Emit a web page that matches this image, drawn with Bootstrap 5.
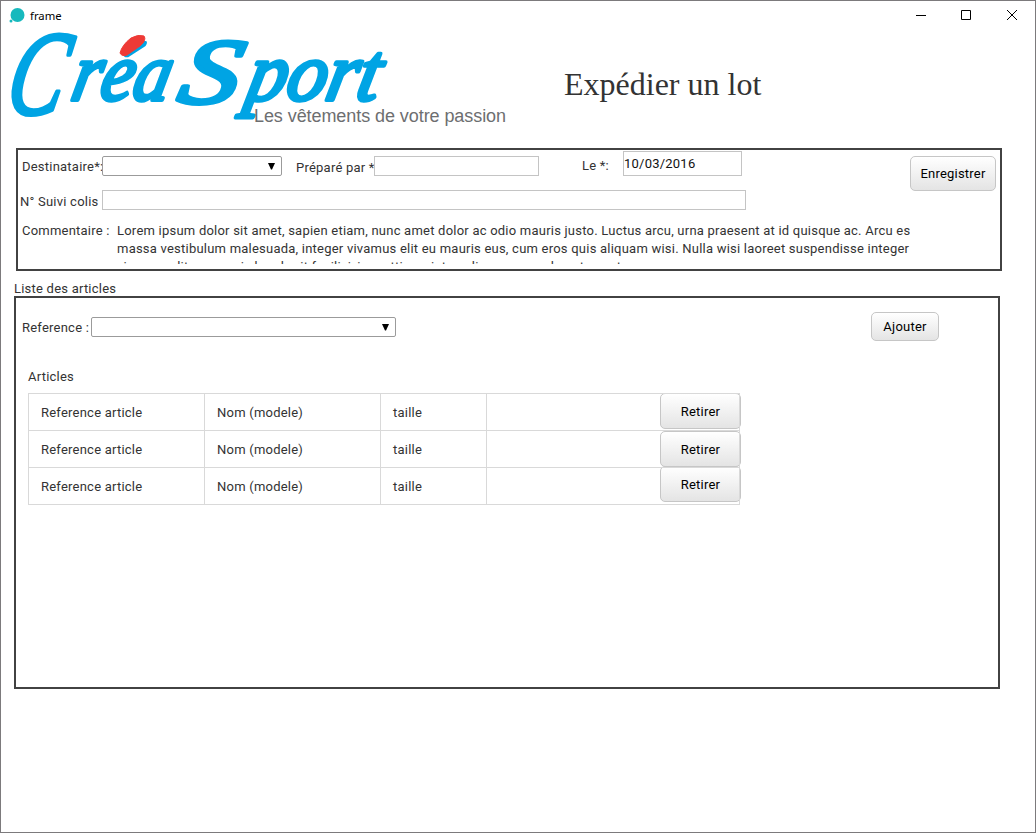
<!DOCTYPE html>
<html lang="fr">
<head>
<meta charset="utf-8">
<title>frame</title>
<link href="https://cdn.jsdelivr.net/npm/bootstrap@5.3.0/dist/css/bootstrap.min.css" rel="stylesheet">
<style>
body{font-family:Roboto,sans-serif;font-size:13px;line-height:18px;letter-spacing:.225px;color:#333;background:#fff}
.win{height:833px;border:1px solid #7c7a7c}
.titlebar{height:29px;padding:0 16px 0 8px}
.titlebar .caption{font-family:"Noto Sans",sans-serif;font-size:11.300px;letter-spacing:0;color:#000}
.masthead{height:118px}
.title{font-family:"Liberation Serif",serif;font-size:32px;line-height:36px;letter-spacing:0;color:#333;margin:36px 0 0 53px;font-weight:400}
.panel{border:2px solid #424242;width:986px}
.p-form{height:123px;margin-left:15px}
.p-list{height:393px;margin-left:13px}
.fld{height:20px;border:1px solid #c4c4c4;border-radius:0;padding:0;min-height:0;font-size:13px;letter-spacing:.225px;background:transparent;flex:none}
.drop{border:1px solid #9b9b9b;border-radius:2px;height:20px;padding-right:6px;flex:none}
.gbtn{--bs-btn-font-size:13px;--bs-btn-padding-x:0;--bs-btn-padding-y:0;--bs-btn-color:#000;border:1px solid #c6c6c6;border-radius:5px;background:linear-gradient(#fff,#e4e4e4);letter-spacing:.225px;display:flex;align-items:center;justify-content:center;flex:none}
.lbl{white-space:nowrap;flex:none}
.comment{width:793px;height:42px;overflow:hidden;white-space:nowrap}
.list-title{margin:9px 0 -2px 13px;height:18px}
.art{width:712px;margin:7px 0 0 12px;table-layout:fixed;border-collapse:collapse;color:#333}
.art td{border:1px solid #d9d9d9;height:37px;padding:1px 0 0 12px;vertical-align:middle}
.art td.act{padding:0;vertical-align:top}
.act .gbtn{width:81px;height:36px;padding-top:1px;margin:-1px -2px 0 auto}
tr:nth-child(2) .act .gbtn{margin-top:0}
tr:nth-child(3) .act .gbtn{margin-top:-2px}
</style>
</head>
<body>
<div class="win d-flex flex-column">
  <header class="titlebar d-flex align-items-center">
    <svg width="17" height="17" viewBox="0 0 17 17"><circle cx="8.500" cy="8" r="7" fill="#17b9bd"/><circle cx="2" cy="14" r="1.500" fill="#17b9bd"/></svg>
    <span class="caption ms-1 me-auto">frame</span>
    <svg width="104" height="14" viewBox="0 0 104 14" fill="none" stroke="#000" stroke-width="1"><path d="M1 6.500h10M46.500 1.500h9v9h-9zM92 1l10 10M102 1l-10 10"/></svg>
  </header>
  <div class="masthead d-flex">
    <svg class="flex-shrink-0" width="510" height="104" viewBox="1 30 510 104" font-family="Liberation Serif, serif">
      <text transform="translate(21.3 0) skewX(-12)" fill="#00a4e4" stroke="#00a4e4" stroke-width="4" stroke-linejoin="round" font-style="italic" letter-spacing="0"><tspan x="6" y="114" font-size="120" textLength="56" lengthAdjust="spacingAndGlyphs">C</tspan><tspan x="69" y="100" font-size="82" textLength="98" lengthAdjust="spacingAndGlyphs">réa</tspan><tspan x="176" y="103" font-size="93" textLength="60" lengthAdjust="spacingAndGlyphs">S</tspan><tspan x="244" y="100" font-size="82" textLength="132" lengthAdjust="spacingAndGlyphs">port</tspan></text>
      <path d="M120 53Q122 45 131 38Q138 34 144 36Q147 40 140 46L127 55Q122 57 120 53Z" fill="#ee3a36" stroke="#ee3a36"/>
      <text x="254" y="122" font-family="Liberation Sans, Arial, sans-serif" font-size="18" letter-spacing="0" fill="#6d6e70" textLength="252">Les vêtements de votre passion</text>
    </svg>
    <h1 class="title">Expédier un lot</h1>
  </div>
  <section class="panel p-form d-flex justify-content-between">
    <div class="d-flex flex-column">
      <div class="d-flex" style="height:40px">
        <label class="lbl" style="width:84px;padding:8px 0 0 4px">Destinataire*:</label>
        <div class="drop d-flex align-items-center justify-content-end" style="width:180px;margin-top:6px"><svg width="7" height="7"><path d="M0 0h7L4 6.500h-1z"/></svg></div>
        <label class="lbl" style="width:92px;padding:9px 0 0 14px">Préparé par *</label>
        <input class="form-control fld" style="width:165px;margin-top:6px">
        <label class="lbl" style="width:84px;padding:7px 0 0 43px">Le *:</label>
        <input class="form-control fld" value="10/03/2016" style="width:119px;height:25px;margin-top:1px;color:#111">
      </div>
      <div class="d-flex">
        <label class="lbl" style="width:84px;padding:3px 0 0 2px">N° Suivi colis</label>
        <input class="form-control fld" style="width:644px">
      </div>
      <div class="d-flex" style="padding:11px 0 0 4px">
        <span class="lbl" style="width:95px">Commentaire :</span>
        <div class="comment">Lorem ipsum dolor sit amet, sapien etiam, nunc amet dolor ac odio mauris justo. Luctus arcu, urna praesent at id quisque ac. Arcu es<br>massa vestibulum malesuada, integer vivamus elit eu mauris eus, cum eros quis aliquam wisi. Nulla wisi laoreet suspendisse integer<br>vivamus elit eu mauris hendrerit facilisi, in mattis a sint eu diam commodo nata eget</div>
      </div>
    </div>
    <button class="btn gbtn" style="width:86px;height:35px;margin:6px 4px 0 0">Enregistrer</button>
  </section>
  <div class="list-title">Liste des articles</div>
  <section class="panel p-list">
    <div class="d-flex">
      <label class="lbl" style="width:75px;padding:21px 0 0 6px">Reference :</label>
      <div class="drop d-flex align-items-center justify-content-end" style="width:305px;margin-top:19px"><svg width="7" height="7"><path d="M0 0h7L4 6.500h-1z"/></svg></div>
      <button class="btn gbtn ms-auto" style="width:68px;height:29px;margin:14px 59px 0 0">Ajouter</button>
    </div>
    <div style="padding:27px 0 0 12px">Articles</div>
    <table class="art">
      <colgroup><col style="width:176px"><col style="width:176px"><col style="width:106px"><col style="width:253px"></colgroup>
      <tbody>
      <tr><td>Reference article</td><td>Nom (modele)</td><td>taille</td><td class="act"><button class="btn gbtn">Retirer</button></td></tr>
      <tr><td>Reference article</td><td>Nom (modele)</td><td>taille</td><td class="act"><button class="btn gbtn">Retirer</button></td></tr>
      <tr><td>Reference article</td><td>Nom (modele)</td><td>taille</td><td class="act"><button class="btn gbtn">Retirer</button></td></tr>
      </tbody>
    </table>
  </section>
</div>
<script src="https://cdn.jsdelivr.net/npm/bootstrap@5.3.0/dist/js/bootstrap.bundle.min.js"></script>
</body>
</html>
